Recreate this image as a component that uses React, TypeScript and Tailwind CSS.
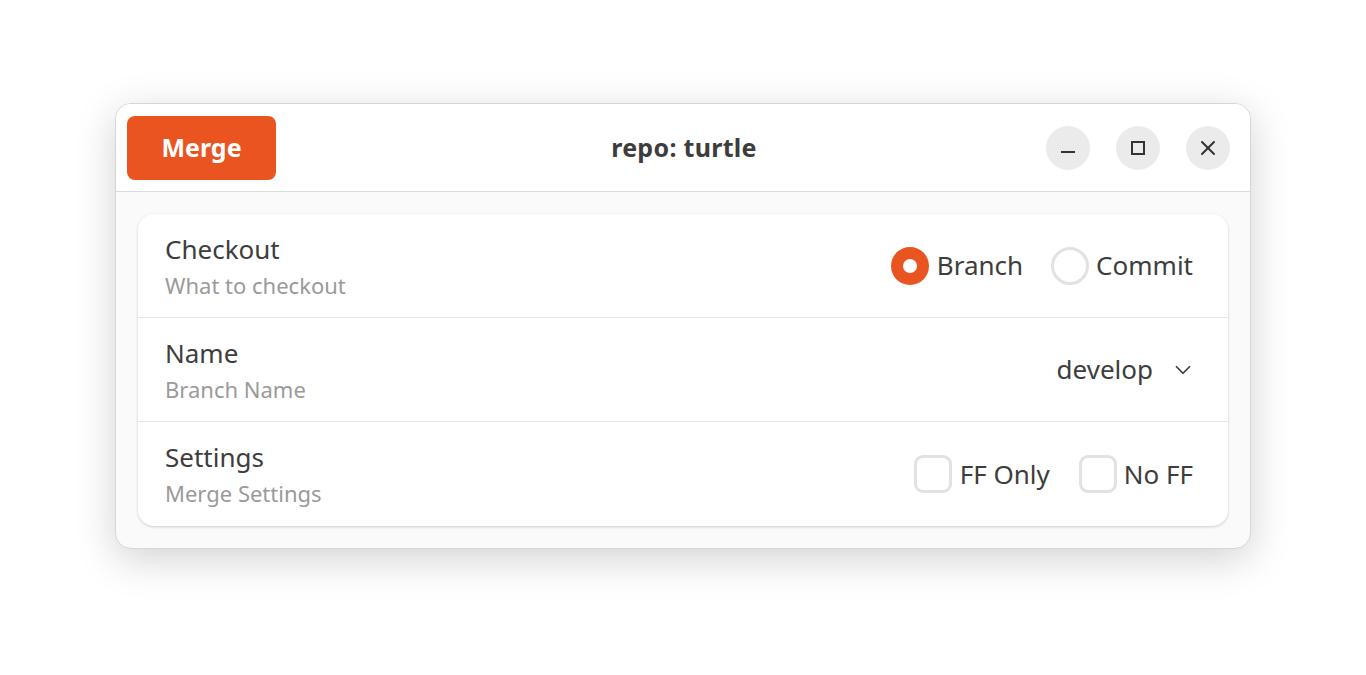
import { ChevronDown, X } from "lucide-react";

const font = { fontFamily: '"Noto Sans", "Open Sans", sans-serif' };

function Row({ title, subtitle, children, last }: { title: string; subtitle: string; children: React.ReactNode; last?: boolean }) {
  return (
    <div className={`flex items-center justify-between h-[104px] pl-[27px] pr-[35px] ${last ? "" : "border-b border-[#e4e4e4]"}`}>
      <div className="flex flex-col">
        <span className="text-[26px] leading-[34px] text-[#3d3d3d]">{title}</span>
        <span className="text-[22px] leading-[30px] text-[#9a9a9a] mt-[4px]">{subtitle}</span>
      </div>
      <div className="flex items-center">{children}</div>
    </div>
  );
}

export default function App() {
  return (
    <div className="min-h-screen bg-white flex justify-center pt-[103px]" style={font}>
      <div className="w-[1136px] h-[446px] rounded-[16px] bg-[#fafafa] border border-[#d6d6d6] shadow-[0_10px_40px_rgba(0,0,0,0.18)] overflow-hidden flex flex-col">
        {/* header bar */}
        <div className="h-[88px] bg-white border-b border-[#dcdcdc] flex items-center justify-between px-[11px] shrink-0">
          <button className="w-[149px] h-[64px] rounded-[8px] bg-[#e95420] text-white text-[25px] font-bold">Merge</button>
          <span className="text-[25px] font-bold text-[#3d3d3d] ml-[46px] tracking-[0.3px]">repo: turtle</span>
          <div className="flex items-center gap-[26px] pr-[9px]">
            <div className="w-[44px] h-[44px] rounded-full bg-[#ebebeb] flex items-center justify-center">
              <svg width="16" height="16" viewBox="0 0 16 16" className="mt-[8px]">
                <rect x="1" y="7" width="14" height="2" fill="#333" />
              </svg>
            </div>
            <div className="w-[44px] h-[44px] rounded-full bg-[#ebebeb] flex items-center justify-center">
              <svg width="16" height="16" viewBox="0 0 16 16">
                <rect x="2" y="2" width="12" height="12" fill="none" stroke="#333" strokeWidth="2" />
              </svg>
            </div>
            <div className="w-[44px] h-[44px] rounded-full bg-[#ebebeb] flex items-center justify-center">
              <X size={24} strokeWidth={2} className="text-[#333]" />
            </div>
          </div>
        </div>

        {/* content */}
        <div className="flex-1 p-[22px]">
          <div className="bg-white rounded-[16px] shadow-[0_1px_3px_rgba(0,0,0,0.18)] flex flex-col">
            <Row title="Checkout" subtitle="What to checkout">
              <div className="flex items-center">
                <span className="w-[38px] h-[38px] rounded-full bg-[#e95420] flex items-center justify-center">
                  <span className="w-[14px] h-[14px] rounded-full bg-white" />
                </span>
                <span className="ml-[8px] text-[26px] text-[#3d3d3d]">Branch</span>
              </div>
              <div className="flex items-center ml-[28px]">
                <span className="w-[38px] h-[38px] rounded-full border-[3px] border-[#e2e2e2]" />
                <span className="ml-[7px] text-[26px] text-[#3d3d3d]">Commit</span>
              </div>
            </Row>
            <Row title="Name" subtitle="Branch Name">
              <span className="text-[26px] text-[#3d3d3d]">develop</span>
              <ChevronDown size={26} strokeWidth={1.6} className="text-[#3d3d3d] ml-[17px] mr-[-3px]" />
            </Row>
            <Row title="Settings" subtitle="Merge Settings" last>
              <div className="flex items-center">
                <span className="w-[38px] h-[38px] rounded-[9px] border-[3px] border-[#e2e2e2]" />
                <span className="ml-[8px] text-[26px] text-[#3d3d3d]">FF Only</span>
              </div>
              <div className="flex items-center ml-[29px]">
                <span className="w-[38px] h-[38px] rounded-[9px] border-[3px] border-[#e2e2e2]" />
                <span className="ml-[7px] text-[26px] text-[#3d3d3d]">No FF</span>
              </div>
            </Row>
          </div>
        </div>
      </div>
    </div>
  );
}
